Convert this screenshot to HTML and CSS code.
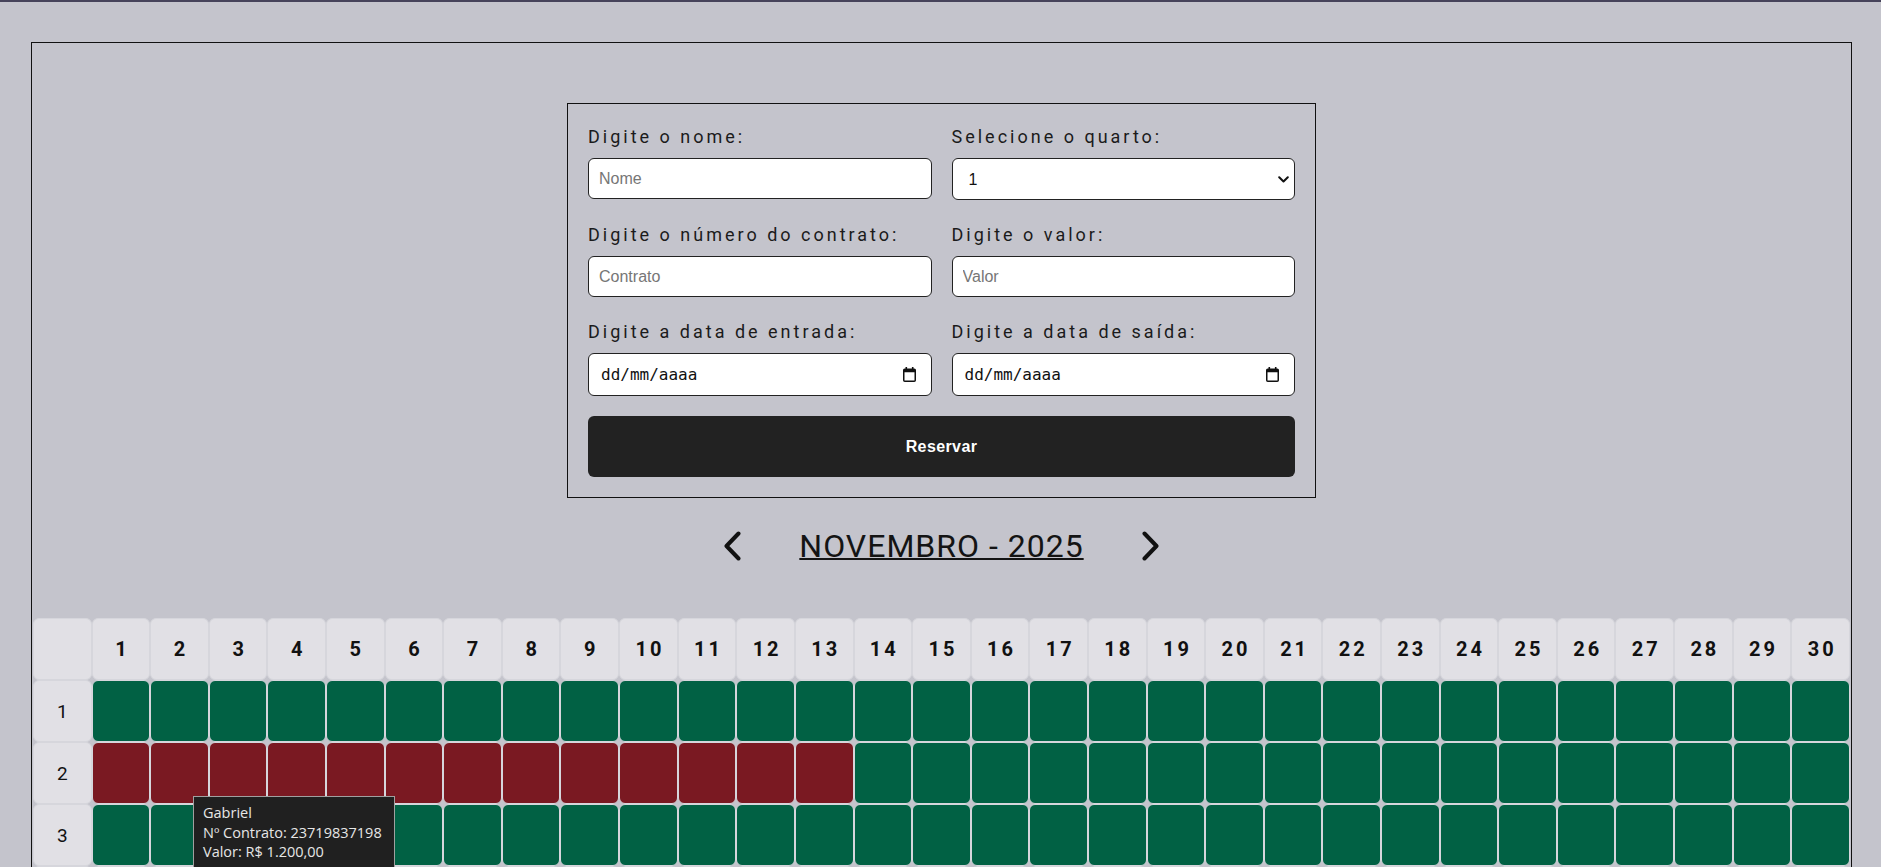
FILE: index.html
```html
<!DOCTYPE html>
<html lang="pt-BR">
<head>
<meta charset="utf-8">
<title>Reservas</title>
<link rel="stylesheet" href="styles.css">
</head>
<body>
<main class="page">
  <form class="booking-form">
    <div class="field">
      <label for="nome">Digite o nome:</label>
      <input id="nome" class="text-input" type="text" placeholder="Nome">
    </div>
    <div class="field">
      <label for="quarto">Selecione o quarto:</label>
      <div class="select-wrap">
        <select id="quarto" class="text-input select-input">
          <option>1</option><option>2</option><option>3</option><option>4</option><option>5</option>
        </select>
        <svg class="select-arrow" width="11" height="7" viewBox="0 0 11 7"><path d="M1.2 1.2 L5.5 5.5 L9.8 1.2" fill="none" stroke="#111" stroke-width="2" stroke-linecap="round" stroke-linejoin="round"/></svg>
      </div>
    </div>
    <div class="field">
      <label for="contrato">Digite o número do contrato:</label>
      <input id="contrato" class="text-input" type="text" placeholder="Contrato">
    </div>
    <div class="field">
      <label for="valor">Digite o valor:</label>
      <input id="valor" class="text-input" type="text" placeholder="Valor">
    </div>
    <div class="field">
      <label>Digite a data de entrada:</label>
      <div class="text-input date-input"><span>dd/mm/aaaa</span>
        <svg width="13" height="15" viewBox="0 0 13 15"><rect x="2.5" y="0" width="1.6" height="3" fill="#111"/><rect x="8.9" y="0" width="1.6" height="3" fill="#111"/><rect x="0.75" y="2.25" width="11.5" height="12" rx="1" fill="none" stroke="#111" stroke-width="1.5"/><rect x="0.75" y="2.25" width="11.5" height="3" fill="#111"/></svg>
      </div>
    </div>
    <div class="field">
      <label>Digite a data de saída:</label>
      <div class="text-input date-input"><span>dd/mm/aaaa</span>
        <svg width="13" height="15" viewBox="0 0 13 15"><rect x="2.5" y="0" width="1.6" height="3" fill="#111"/><rect x="8.9" y="0" width="1.6" height="3" fill="#111"/><rect x="0.75" y="2.25" width="11.5" height="12" rx="1" fill="none" stroke="#111" stroke-width="1.5"/><rect x="0.75" y="2.25" width="11.5" height="3" fill="#111"/></svg>
      </div>
    </div>
    <button type="button" class="submit">Reservar</button>
  </form>

  <nav class="month-nav">
    <button type="button" class="nav-btn" aria-label="Mês anterior"><svg width="17" height="30" viewBox="0 0 17 30"><path d="M14.5 2.5 L2.5 15 L14.5 27.5" fill="none" stroke="#111" stroke-width="4" stroke-linecap="round" stroke-linejoin="round"/></svg></button>
    <h2 class="month-title">NOVEMBRO - 2025</h2>
    <button type="button" class="nav-btn" aria-label="Próximo mês"><svg width="17" height="30" viewBox="0 0 17 30"><path d="M2.5 2.5 L14.5 15 L2.5 27.5" fill="none" stroke="#111" stroke-width="4" stroke-linecap="round" stroke-linejoin="round"/></svg></button>
  </nav>

  <div class="grid-wrap">
    <table class="schedule">
      <thead>
        <tr><th class="corner"></th><th>1</th><th>2</th><th>3</th><th>4</th><th>5</th><th>6</th><th>7</th><th>8</th><th>9</th><th>10</th><th>11</th><th>12</th><th>13</th><th>14</th><th>15</th><th>16</th><th>17</th><th>18</th><th>19</th><th>20</th><th>21</th><th>22</th><th>23</th><th>24</th><th>25</th><th>26</th><th>27</th><th>28</th><th>29</th><th>30</th></tr>
      </thead>
      <tbody>
        <tr><th class="room">1</th><td class="free"></td><td class="free"></td><td class="free"></td><td class="free"></td><td class="free"></td><td class="free"></td><td class="free"></td><td class="free"></td><td class="free"></td><td class="free"></td><td class="free"></td><td class="free"></td><td class="free"></td><td class="free"></td><td class="free"></td><td class="free"></td><td class="free"></td><td class="free"></td><td class="free"></td><td class="free"></td><td class="free"></td><td class="free"></td><td class="free"></td><td class="free"></td><td class="free"></td><td class="free"></td><td class="free"></td><td class="free"></td><td class="free"></td><td class="free"></td></tr>
        <tr><th class="room">2</th><td class="busy"></td><td class="busy"></td><td class="busy"></td><td class="busy"></td><td class="busy"></td><td class="busy"></td><td class="busy"></td><td class="busy"></td><td class="busy"></td><td class="busy"></td><td class="busy"></td><td class="busy"></td><td class="busy"></td><td class="free"></td><td class="free"></td><td class="free"></td><td class="free"></td><td class="free"></td><td class="free"></td><td class="free"></td><td class="free"></td><td class="free"></td><td class="free"></td><td class="free"></td><td class="free"></td><td class="free"></td><td class="free"></td><td class="free"></td><td class="free"></td><td class="free"></td></tr>
        <tr><th class="room">3</th><td class="free"></td><td class="free"></td><td class="free"></td><td class="free"></td><td class="free"></td><td class="free"></td><td class="free"></td><td class="free"></td><td class="free"></td><td class="free"></td><td class="free"></td><td class="free"></td><td class="free"></td><td class="free"></td><td class="free"></td><td class="free"></td><td class="free"></td><td class="free"></td><td class="free"></td><td class="free"></td><td class="free"></td><td class="free"></td><td class="free"></td><td class="free"></td><td class="free"></td><td class="free"></td><td class="free"></td><td class="free"></td><td class="free"></td><td class="free"></td></tr>
        <tr><th class="room">4</th><td class="free"></td><td class="free"></td><td class="free"></td><td class="free"></td><td class="free"></td><td class="free"></td><td class="free"></td><td class="free"></td><td class="free"></td><td class="free"></td><td class="free"></td><td class="free"></td><td class="free"></td><td class="free"></td><td class="free"></td><td class="free"></td><td class="free"></td><td class="free"></td><td class="free"></td><td class="free"></td><td class="free"></td><td class="free"></td><td class="free"></td><td class="free"></td><td class="free"></td><td class="free"></td><td class="free"></td><td class="free"></td><td class="free"></td><td class="free"></td></tr>
        <tr><th class="room">5</th><td class="free"></td><td class="free"></td><td class="free"></td><td class="free"></td><td class="free"></td><td class="free"></td><td class="free"></td><td class="free"></td><td class="free"></td><td class="free"></td><td class="free"></td><td class="free"></td><td class="free"></td><td class="free"></td><td class="free"></td><td class="free"></td><td class="free"></td><td class="free"></td><td class="free"></td><td class="free"></td><td class="free"></td><td class="free"></td><td class="free"></td><td class="free"></td><td class="free"></td><td class="free"></td><td class="free"></td><td class="free"></td><td class="free"></td><td class="free"></td></tr>
      </tbody>
    </table>
  </div>

  <div class="tooltip" role="tooltip">
    <div>Gabriel</div>
    <div>Nº Contrato: 23719837198</div>
    <div>Valor: R$ 1.200,00</div>
  </div>
</main>
</body>
</html>
```

FILE: styles.css
```css
* {
  box-sizing: border-box;
}

html {
  scrollbar-width: none;
}

body {
  margin: 0;
  background: #c4c4cc;
  border-top: 2px solid #46435a;
  font-family: Roboto, "Liberation Sans", sans-serif;
  color: #1b1b1b;
}

.page {
  position: relative;
  margin: 40px 29px 0 31px;
  border: 1px solid #111;
  padding-top: 60px;
}

/* ---------- form ---------- */
.booking-form {
  width: 749px;
  margin: 0 auto;
  border: 1px solid #111;
  padding: 20px;
  display: grid;
  grid-template-columns: 1fr 1fr;
  column-gap: 20px;
  row-gap: 22px;
}

.field label {
  display: block;
  font-size: 18px;
  line-height: 26px;
  letter-spacing: 3px;
  margin-bottom: 8px;
  color: #1b1b1b;
}

.text-input {
  display: block;
  width: 100%;
  height: 41px;
  border: 1px solid #222;
  border-radius: 6px;
  background: #fff;
  padding: 0 10px;
  font: 16px "Liberation Sans", Arial, sans-serif;
  color: #111;
  outline: none;
}

.text-input::placeholder {
  color: #767676;
}

.select-wrap {
  position: relative;
}

.select-input {
  appearance: none;
  -webkit-appearance: none;
  height: 42px;
  padding-left: 16px;
}

.select-arrow {
  position: absolute;
  right: 6px;
  top: 18px;
  pointer-events: none;
}

.date-input {
  height: 43px;
  display: flex;
  align-items: center;
  justify-content: space-between;
  padding: 0 15px 0 12px;
  font: 16px "DejaVu Sans Mono", "Liberation Mono", monospace;
  color: #111;
}

.submit {
  grid-column: 1 / -1;
  margin-top: -2px;
  height: 61px;
  border: 0;
  border-radius: 6px;
  background: #222;
  color: #fff;
  font: bold 16px "Liberation Sans", Arial, sans-serif;
  letter-spacing: 0.4px;
  cursor: pointer;
}

/* ---------- month nav ---------- */
.month-nav {
  display: flex;
  justify-content: center;
  align-items: center;
  gap: 58px;
  margin: 29px 0 53px;
}

.nav-btn {
  border: 0;
  padding: 0;
  background: none;
  display: flex;
  cursor: pointer;
}

.month-title {
  margin: 0;
  font-size: 32px;
  font-weight: 400;
  line-height: 38px;
  letter-spacing: 1px;
  text-decoration: underline;
  text-decoration-thickness: 2px;
  color: #141414;
}

/* ---------- schedule grid ---------- */
.grid-wrap {
  padding: 0 1px;
}

.schedule {
  width: 100%;
  table-layout: fixed;
  border-collapse: separate;
  border-spacing: 0;
}

.schedule th,
.schedule td {
  height: 62px;
  padding: 0;
  border: 1px solid #d6d6dc;
  border-radius: 6px;
  text-align: center;
  vertical-align: middle;
}

.schedule thead th {
  background: #e1e0e5;
  font-size: 20px;
  font-weight: 700;
  letter-spacing: 3px;
  padding-left: 3px;
  color: #111;
}

.schedule th.room {
  background: #e1e0e5;
  font-size: 19px;
  font-weight: 400;
  color: #111;
}

.schedule td.free {
  background: #016144;
}

.schedule td.busy {
  background: #7a1922;
}

/* ---------- tooltip ---------- */
.tooltip {
  position: absolute;
  left: 161px;
  top: 753px;
  background: #202020;
  border: 1px solid #a0a0a0;
  color: #e6e6e6;
  font: 14.5px/19.5px "Open Sans", "Noto Sans", sans-serif;
  padding: 6px 12px 6px 9px;
}
```
